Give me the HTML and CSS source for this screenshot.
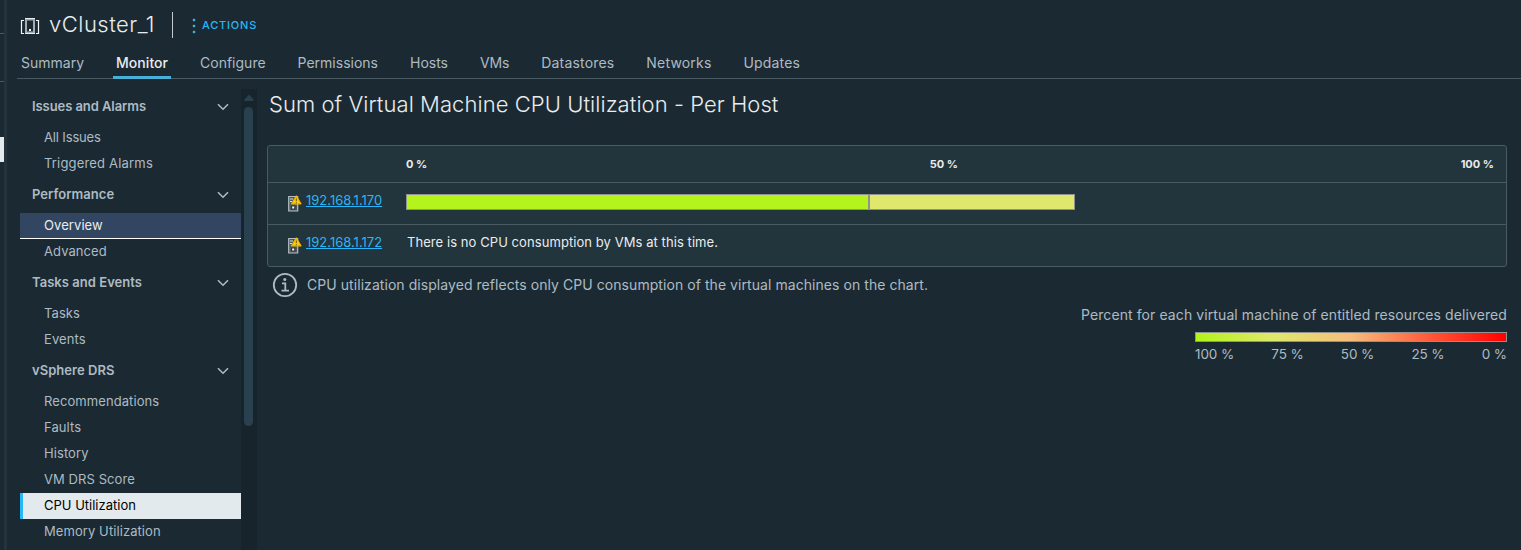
FILE: index.html
```html
<!DOCTYPE html>
<html lang="en">
<head>
<meta charset="utf-8">
<title>vCluster_1</title>
<link rel="stylesheet" href="styles.css">
</head>
<body>
<div class="app">
  <div class="gutter"><i class="rule rule-a"></i><i class="rule rule-b"></i><i class="marker"></i></div>
  <main class="page">
    <header class="head">
      <svg class="cluster-icon" width="20" height="18" viewBox="0 0 20 18" fill="none"><path d="M4 4.500H1.500v13H4M16 4.500h2.500v13H16" stroke="#f2f4f5" stroke-width="1.200"/><path d="M6 3.500h8v13H6z" stroke="#a3adb3" stroke-width="2"/><path d="M5 2.500h10M5 17.500h10" stroke="#e9ecef"/><path d="M9 13h2v2H9z" fill="#fff"/></svg>
      <h1 class="title">vCluster_1</h1>
      <span class="bar"></span>
      <svg class="dots" width="4" height="16" viewBox="0 0 4 16" fill="#49afd9"><path d="M1 1h2v2H1zM1 7h2v2H1zM1 13h2v2H1z" stroke="#49afd9" stroke-width=".4"/></svg>
      <span class="actions">ACTIONS</span>
    </header>
    <nav class="tabs">
      <a class="tab">Summary</a><a class="tab active">Monitor</a><a class="tab">Configure</a><a class="tab">Permissions</a><a class="tab">Hosts</a><a class="tab tight">VMs</a><a class="tab wide">Datastores</a><a class="tab wide">Networks</a><a class="tab wide">Updates</a>
    </nav>
    <div class="body">
      <aside class="side">
        <h3 class="group first"><span>Issues and Alarms</span><svg width="12" height="8" viewBox="0 0 12 8"><path d="M1 1.200l5 5 5-5"/></svg></h3>
        <a class="item tight">All Issues</a>
        <a class="item wide">Triggered Alarms</a>
        <h3 class="group"><span>Performance</span><svg width="12" height="8" viewBox="0 0 12 8"><path d="M1 1.200l5 5 5-5"/></svg></h3>
        <a class="item hover">Overview</a>
        <a class="item">Advanced</a>
        <h3 class="group"><span>Tasks and Events</span><svg width="12" height="8" viewBox="0 0 12 8"><path d="M1 1.200l5 5 5-5"/></svg></h3>
        <a class="item">Tasks</a>
        <a class="item">Events</a>
        <h3 class="group"><span>vSphere DRS</span><svg width="12" height="8" viewBox="0 0 12 8"><path d="M1 1.200l5 5 5-5"/></svg></h3>
        <a class="item">Recommendations</a>
        <a class="item">Faults</a>
        <a class="item">History</a>
        <a class="item">VM DRS Score</a>
        <a class="item selected">CPU Utilization</a>
        <a class="item">Memory Utilization</a>
      </aside>
      <div class="scroll"><svg width="10" height="8" viewBox="0 0 10 8"><path d="M5 .5L9.500 5.500V7H.5V5.500z" fill="#29414e"/></svg><i class="thumb"></i></div>
      <section class="content">
        <h2 class="heading">Sum of Virtual Machine CPU Utilization - Per Host</h2>
        <div class="grid">
          <div class="row scale"><b>0 %</b><b>50 %</b><b>100 %</b></div>
          <div class="row">
            <div class="host"><svg class="host-icon" width="14" height="17" viewBox="0 0 14 17"><path d="M.700 1.500h9v14.500h-9z" fill="#4b5a61" stroke="#b4bdc1" stroke-width="1.200"/><path d="M2 4h3M2 6.500h2" stroke="#d5dbde"/><path d="M3 10.500h4.500v4H3z" fill="#2b3a41"/><path d="M4.200 11.500h2v2h-2z" fill="#fff"/><path d="M8.300 1L13 8.800H3.600z" fill="#fdcd12" stroke="#f0b400" stroke-width="1.200" stroke-linejoin="round"/><path d="M8.300 3.500v2.700M8.300 7.200v1.100" stroke="#6b5200"/></svg><a class="link">192.168.1.170</a></div>
            <div class="usage"><i class="vm vm-a"></i><i class="vm vm-b"></i></div>
          </div>
          <div class="row">
            <div class="host"><svg class="host-icon" width="14" height="17" viewBox="0 0 14 17"><path d="M.700 1.500h9v14.500h-9z" fill="#4b5a61" stroke="#b4bdc1" stroke-width="1.200"/><path d="M2 4h3M2 6.500h2" stroke="#d5dbde"/><path d="M3 10.500h4.500v4H3z" fill="#2b3a41"/><path d="M4.200 11.500h2v2h-2z" fill="#fff"/><path d="M8.300 1L13 8.800H3.600z" fill="#fdcd12" stroke="#f0b400" stroke-width="1.200" stroke-linejoin="round"/><path d="M8.300 3.500v2.700M8.300 7.200v1.100" stroke="#6b5200"/></svg><a class="link">192.168.1.172</a></div>
            <div class="none">There is no CPU consumption by VMs at this time.</div>
          </div>
        </div>
        <div class="info"><svg width="26" height="26" viewBox="0 0 26 26" fill="none" stroke="#adbbc4" stroke-width="1.800"><circle cx="13" cy="13" r="11.200"/><path d="M10 11.300h3.300v7M9.500 18.700h7.500"/><circle cx="12.800" cy="7.500" r="1.500" fill="#adbbc4" stroke="none"/></svg><span>CPU utilization displayed reflects only CPU consumption of the virtual machines on the chart.</span></div>
        <div class="legend">
          <div class="caption">Percent for each virtual machine of entitled resources delivered</div>
          <div class="ramp"></div>
          <div class="ticks"><span>100 %</span><span>75 %</span><span>50 %</span><span>25 %</span><span>0 %</span></div>
        </div>
      </section>
    </div>
  </main>
</div>
</body>
</html>
```
FILE: styles.css
```css
* { box-sizing: border-box; }
body { margin: 0; background: #1b2a32; color: #adbbc4; font: 14px/20px Inter, "Open Sans", sans-serif; }
h1, h2, h3 { margin: 0; font-weight: 300; }
.app { display: flex; height: 550px; overflow: hidden; }
.gutter { width: 7px; flex: none; border-right: 3px solid #25333d; display: flex; flex-direction: column; }
.rule { height: 1px; background: #495a63; }
.rule-a { margin-top: 33px; }
.rule-b { margin-top: 47px; }
.marker { height: 25px; margin-top: 55px; background: #e3ebef; }
.page { flex: 1; display: flex; flex-direction: column; }
.head { display: flex; align-items: center; height: 50px; padding-left: 13px; }
.title { margin: -2px 0 0 9px; width: 107px; font-size: 22px; line-height: 28px; letter-spacing: .5px; color: #e9ecef; white-space: nowrap; }
.bar { width: 1px; height: 26px; margin-left: 16px; background: #c4cbcf; }
.dots { margin: 2px 0 0 19px; }
.actions { margin-left: 6px; font-size: 11px; font-weight: 500; letter-spacing: .8px; color: #29b6f6; }
.tabs { display: flex; height: 29px; margin-left: 10px; padding-left: 4px; border-bottom: 1px solid #495a63; gap: 32px; }
.tab { line-height: 26px; height: 29px; white-space: nowrap; }
.active { margin: 0 -3px; padding: 0 3px; color: #e9ecef; font-weight: 500; letter-spacing: .05px; box-shadow: inset 0 -3px #49afd9; }
.body { display: flex; flex: 1; padding: 10px 0 0 13px; }
.side { width: 221px; flex: none; font-size: 13px; letter-spacing: .08px; }
.group { display: flex; align-items: center; justify-content: space-between; height: 36px; padding: 0 12px; font-size: 13px; font-weight: 600; letter-spacing: .04px; line-height: 18px; }
.group span { margin-top: -2px; }
.group.first { letter-spacing: -.07px; }
.group svg { fill: none; stroke: #adbbc4; stroke-width: 1.6; }
.item { display: block; height: 26px; padding-left: 24px; line-height: 24px; }
.tight { letter-spacing: -.15px; }
.wide { letter-spacing: .18px; }
.hover { background: #324661; color: #e9ecef; border-bottom: 1px solid #fff; }
.selected { background: #e3eaed; color: #000; letter-spacing: 0; box-shadow: inset 3px 0 #29b6f6; }
.scroll { width: 16px; flex: none; background: #17242b; display: flex; flex-direction: column; align-items: center; padding: 5px 1px 0 0; }
.thumb { width: 9px; height: 319px; margin-top: 5px; border-radius: 5px; background: #29414e; }
.content { flex: 1; padding: 0 14px 0 10px; }
.heading { font-size: 22px; line-height: 30px; padding-left: 2px; letter-spacing: .06px; color: #e9ecef; }
.grid { margin-top: 26px; height: 122px; border: 1px solid #495a63; border-radius: 3px; background: #22343c; color: #e9ecef; }
.row { display: flex; height: 42px; padding-left: 20px; border-top: 1px solid #495a63; font-size: 13px; letter-spacing: .07px; }
.scale { height: 36px; align-items: center; padding: 0 12px 0 138px; border: 0; justify-content: space-between; font-size: 11px; letter-spacing: 0; }
.host { width: 118px; display: flex; }
.host-icon { margin: 12px 4px 0 0; }
.link { color: #29b6f6; text-decoration: underline; line-height: 34px; letter-spacing: 0; }
.usage { display: flex; width: 669px; height: 16px; margin-top: 11px; }
.vm { border: 1px solid #919191; }
.vm-a { width: 463px; background: #b4f41c; }
.vm-b { flex: 1; background: #dfe86c; }
.none { line-height: 34px; padding-left: 1px; }
.info { display: flex; align-items: center; height: 26px; margin-top: 5px; padding-left: 5px; gap: 9px; letter-spacing: .06px; }
.info span { margin-top: -1px; }
.legend { display: flex; flex-direction: column; align-items: flex-end; margin-top: 7px; }
.caption { letter-spacing: .092px; }
.ramp { width: 312px; height: 10px; margin-top: 7px; border: 1px solid #919191; background: linear-gradient(90deg, #b2f41a, #dfe86c 25%, #f7bd7c 50%, #ff5a3a 75%, #f00); }
.ticks { display: flex; justify-content: space-between; width: 312px; margin-top: 2px; font-size: 13.5px; letter-spacing: -.1px; }
```
